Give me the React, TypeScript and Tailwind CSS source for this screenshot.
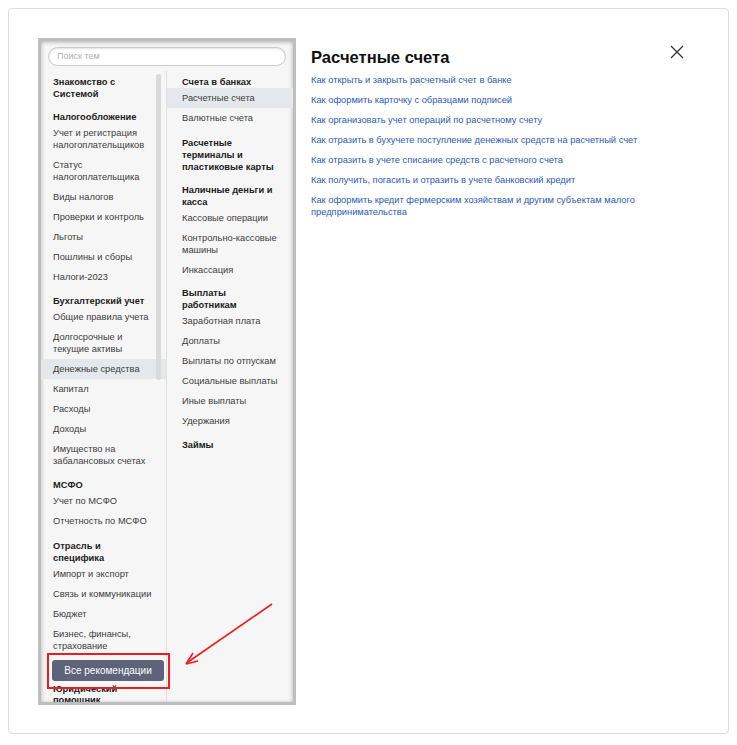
import React from "react";

type Entry = { h?: boolean; t: string; mt?: string; active?: boolean };

const leftList: Entry[] = [
  { h: true, t: "Знакомство с\nСистемой" },
  { h: true, t: "Налогообложение", mt: "mt-[11px]" },
  { t: "Учет и регистрация\nналогоплательщиков" },
  { t: "Статус\nналогоплательщика" },
  { t: "Виды налогов" },
  { t: "Проверки и контроль" },
  { t: "Льготы" },
  { t: "Пошлины и сборы" },
  { t: "Налоги-2023" },
  { h: true, t: "Бухгалтерский учет", mt: "mt-[8px]" },
  { t: "Общие правила учета" },
  { t: "Долгосрочные и\nтекущие активы" },
  { t: "Денежные средства", active: true },
  { t: "Капитал" },
  { t: "Расходы" },
  { t: "Доходы" },
  { t: "Имущество на\nзабалансовых счетах" },
  { h: true, t: "МСФО", mt: "mt-[8px]" },
  { t: "Учет по МСФО" },
  { t: "Отчетность по МСФО" },
  { h: true, t: "Отрасль и\nспецифика", mt: "mt-[9px]" },
  { t: "Импорт и экспорт" },
  { t: "Связь и коммуникации" },
  { t: "Бюджет" },
  { t: "Бизнес, финансы,\nстрахование" },
];

const midList: Entry[] = [
  { h: true, t: "Счета в банках" },
  { t: "Расчетные счета", active: true },
  { t: "Валютные счета" },
  { h: true, t: "Расчетные\nтерминалы и\nпластиковые карты", mt: "mt-[9px]" },
  { h: true, t: "Наличные деньги и\nкасса", mt: "mt-[11px]" },
  { t: "Кассовые операции" },
  { t: "Контрольно-кассовые\nмашины" },
  { t: "Инкассация" },
  { h: true, t: "Выплаты\nработникам", mt: "mt-[7px]" },
  { t: "Заработная плата" },
  { t: "Доплаты" },
  { t: "Выплаты по отпускам" },
  { t: "Социальные выплаты" },
  { t: "Иные выплаты" },
  { t: "Удержания" },
  { h: true, t: "Займы", mt: "mt-[8px]" },
];

const links = [
  "Как открыть и закрыть расчетный счет в банке",
  "Как оформить карточку с образцами подписей",
  "Как организовать учет операций по расчетному счету",
  "Как отразить в бухучете поступление денежных средств на расчетный счет",
  "Как отразить в учете списание средств с расчетного счета",
  "Как получить, погасить и отразить в учете банковский кредит",
  "Как оформить кредит фермерским хозяйствам и другим субъектам малого\nпредпринимательства",
];

function Row({ e, pl }: { e: Entry; pl: string }) {
  if (e.h) {
    return (
      <div className={`${e.mt ?? ""} ${pl} whitespace-pre-line text-[9.3px] font-bold leading-[12px] text-[#222]`}>
        {e.t}
      </div>
    );
  }
  return (
    <div
      className={`${pl} whitespace-pre-line py-[4px] text-[9.3px] leading-[12px] text-[#3d3d3d] ${
        e.active ? "bg-[#e4e7eb]" : ""
      }`}
    >
      {e.t}
    </div>
  );
}

export default function App() {
  return (
    <div className="relative h-[745px] w-[737px] bg-white p-[8px] font-['Liberation_Sans',Arial,sans-serif]">
      <div className="flex h-[726px] w-[721px] rounded-[4px] border border-[#dcdcdc] pl-[29px] pt-[29px]">
        {/* screenshot panel */}
        <div className="flex h-[667px] w-[258px] shrink-0 flex-col overflow-hidden border-[3px] border-[#bebebe] bg-[#f6f6f6] shadow-[inset_0_1px_4px_rgba(0,0,0,0.3)]">
          <div className="px-[7px] pt-[6px]">
            <div className="flex h-[19px] items-center rounded-full border border-[#c9c9c9] bg-white pl-[8px] shadow-[inset_0_1px_2px_rgba(0,0,0,0.12)]">
              <span className="text-[9px] text-[#b0b0b0]">Поиск тем</span>
            </div>
          </div>
          <div className="mx-[4px] mt-[5px] h-[2px] bg-[#e8161b]" />
          <div className="flex flex-1">
            <div className="relative w-[126px] border-r border-[#e0e0e0] pt-[5px]">
              {leftList.map((e, i) => (
                <Row key={i} e={e} pl="pl-[12px]" />
              ))}
              <div className="pl-[11px] pt-[4px]">
                <div className="flex h-[21px] w-[112px] items-center justify-center rounded-[3px] bg-[#5d6479] text-[10px] text-white">
                  Все рекомендации
                </div>
              </div>
              <div className="mt-[3px] whitespace-pre-line pl-[12px] text-[9.3px] font-bold leading-[11px] text-[#222]">
                {"Юридический\nпомощник"}
              </div>
              <div className="absolute right-[5px] top-[3px] h-[306px] w-[5px] rounded-full bg-[#dadada]" />
            </div>
            <div className="flex-1 pt-[5px]">
              {midList.map((e, i) => (
                <Row key={i} e={e} pl="pl-[15px]" />
              ))}
            </div>
          </div>
        </div>

        {/* content */}
        <div className="ml-[15px] flex-1 pt-[10px]">
          <h1 className="text-[16.6px] font-bold leading-[20px] text-[#111]">Расчетные счета</h1>
          <div className="mt-[2px] w-[340px]">
            {links.map((l, i) => (
              <div key={i} className="whitespace-pre-line py-[4px] text-[9.3px] leading-[12px] text-[#2d5ab8]">
                {l}
              </div>
            ))}
          </div>
        </div>

        <div className="mr-[44px] mt-[7px] shrink-0">
          <svg width="14" height="14" viewBox="0 0 14 14" fill="none" stroke="#333" strokeWidth="1.3">
            <path d="M1 1L13 13M13 1L1 13" />
          </svg>
        </div>
      </div>

      {/* annotations */}
      <svg className="pointer-events-none absolute left-0 top-0" width="737" height="745" fill="none">
        <rect x="48" y="654" width="121" height="34" stroke="#ee1c1c" strokeWidth="2" />
        <path d="M272 604L188 662" stroke="#ee1c1c" strokeWidth="1.6" />
        <path d="M186 664L193 653M186 664L198 661" stroke="#ee1c1c" strokeWidth="1.6" />
      </svg>
    </div>
  );
}
